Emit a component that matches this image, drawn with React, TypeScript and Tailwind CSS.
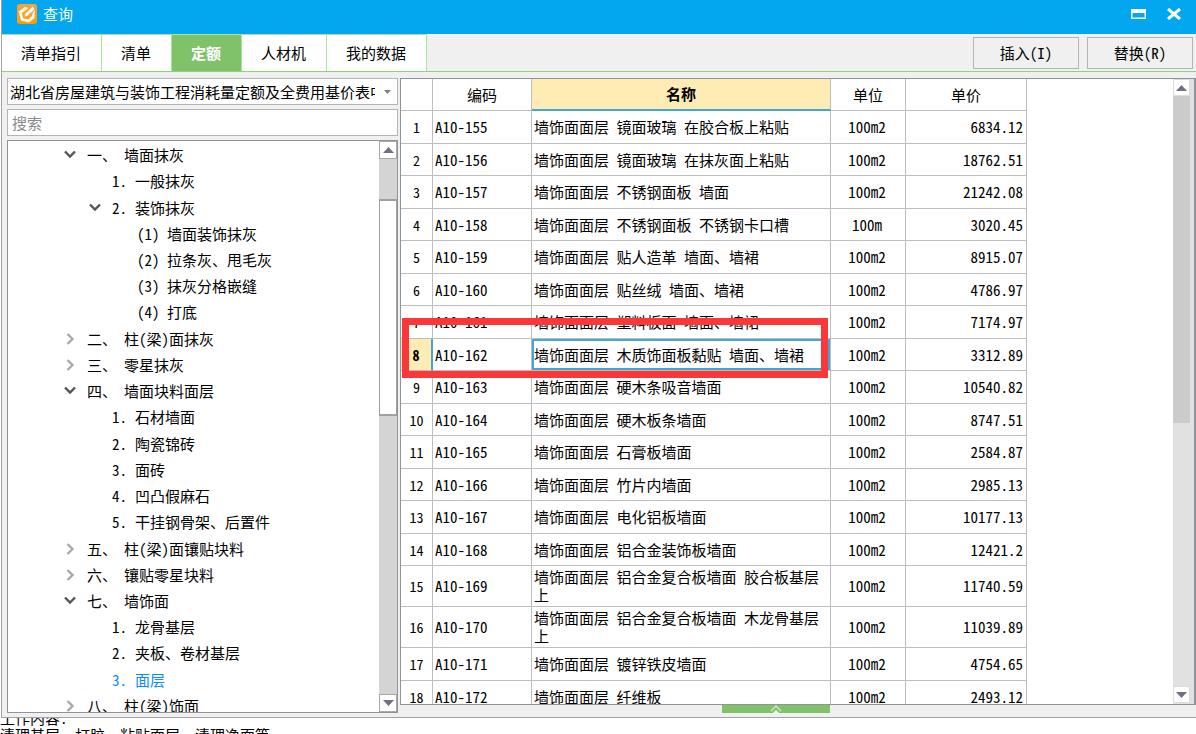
import { useState } from "react";

type TreeItem = {
  id: string;
  label: string;
  title: string;
  level: 1 | 2 | 3;
  open?: boolean;
};

type PriceRow = {
  code: string;
  name: string;
  unit: string;
  price: string;
};

const tabs = ["清单指引", "清单", "定额", "人材机", "我的数据"];

const tree: TreeItem[] = [
  { id: "1", label: "一、", title: "墙面抹灰", level: 1, open: true },
  { id: "1-1", label: "1.", title: "一般抹灰", level: 2 },
  { id: "1-2", label: "2.", title: "装饰抹灰", level: 2, open: true },
  { id: "1-2-1", label: "(1)", title: "墙面装饰抹灰", level: 3 },
  { id: "1-2-2", label: "(2)", title: "拉条灰、甩毛灰", level: 3 },
  { id: "1-2-3", label: "(3)", title: "抹灰分格嵌缝", level: 3 },
  { id: "1-2-4", label: "(4)", title: "打底", level: 3 },
  { id: "2", label: "二、", title: "柱(梁)面抹灰", level: 1, open: false },
  { id: "3", label: "三、", title: "零星抹灰", level: 1, open: false },
  { id: "4", label: "四、", title: "墙面块料面层", level: 1, open: true },
  { id: "4-1", label: "1.", title: "石材墙面", level: 2 },
  { id: "4-2", label: "2.", title: "陶瓷锦砖", level: 2 },
  { id: "4-3", label: "3.", title: "面砖", level: 2 },
  { id: "4-4", label: "4.", title: "凹凸假麻石", level: 2 },
  { id: "4-5", label: "5.", title: "干挂钢骨架、后置件", level: 2 },
  { id: "5", label: "五、", title: "柱(梁)面镶贴块料", level: 1, open: false },
  { id: "6", label: "六、", title: "镶贴零星块料", level: 1, open: false },
  { id: "7", label: "七、", title: "墙饰面", level: 1, open: true },
  { id: "7-1", label: "1.", title: "龙骨基层", level: 2 },
  { id: "7-2", label: "2.", title: "夹板、卷材基层", level: 2 },
  { id: "7-3", label: "3.", title: "面层", level: 2 },
  { id: "8", label: "八、", title: "柱(梁)饰面", level: 1, open: false }
];

const rows: PriceRow[] = [
  { code: "A10-155", name: "墙饰面面层 镜面玻璃 在胶合板上粘贴", unit: "100m2", price: "6834.12" },
  { code: "A10-156", name: "墙饰面面层 镜面玻璃 在抹灰面上粘贴", unit: "100m2", price: "18762.51" },
  { code: "A10-157", name: "墙饰面面层 不锈钢面板 墙面", unit: "100m2", price: "21242.08" },
  { code: "A10-158", name: "墙饰面面层 不锈钢面板 不锈钢卡口槽", unit: "100m", price: "3020.45" },
  { code: "A10-159", name: "墙饰面面层 贴人造革 墙面、墙裙", unit: "100m2", price: "8915.07" },
  { code: "A10-160", name: "墙饰面面层 贴丝绒 墙面、墙裙", unit: "100m2", price: "4786.97" },
  { code: "A10-161", name: "墙饰面面层 塑料板面 墙面、墙裙", unit: "100m2", price: "7174.97" },
  { code: "A10-162", name: "墙饰面面层 木质饰面板黏贴 墙面、墙裙", unit: "100m2", price: "3312.89" },
  { code: "A10-163", name: "墙饰面面层 硬木条吸音墙面", unit: "100m2", price: "10540.82" },
  { code: "A10-164", name: "墙饰面面层 硬木板条墙面", unit: "100m2", price: "8747.51" },
  { code: "A10-165", name: "墙饰面面层 石膏板墙面", unit: "100m2", price: "2584.87" },
  { code: "A10-166", name: "墙饰面面层 竹片内墙面", unit: "100m2", price: "2985.13" },
  { code: "A10-167", name: "墙饰面面层 电化铝板墙面", unit: "100m2", price: "10177.13" },
  { code: "A10-168", name: "墙饰面面层 铝合金装饰板墙面", unit: "100m2", price: "12421.2" },
  { code: "A10-169", name: "墙饰面面层 铝合金复合板墙面 胶合板基层上", unit: "100m2", price: "11740.59" },
  { code: "A10-170", name: "墙饰面面层 铝合金复合板墙面 木龙骨基层上", unit: "100m2", price: "11039.89" },
  { code: "A10-171", name: "墙饰面面层 镀锌铁皮墙面", unit: "100m2", price: "4754.65" },
  { code: "A10-172", name: "墙饰面面层 纤维板", unit: "100m2", price: "2493.12" }
];

const indent = {
  1: "pl-14",
  2: "pl-[81px]",
  3: "pl-[106px]"
};

const labelWidth = {
  1: "w-[37px]",
  2: "w-[23px]",
  3: "w-[30px]"
};

function Logo() {
  return (
    <svg className="h-5 w-5" viewBox="0 0 20 20" aria-hidden="true">
      <defs>
        <linearGradient id="logo" x1="0" y1="0" x2="0" y2="1">
          <stop offset="0" stopColor="#f0a640" />
          <stop offset="1" stopColor="#fd9c06" />
        </linearGradient>
      </defs>
      <rect width="20" height="20" rx="3" fill="url(#logo)" />
      <path d="M1.500 7.500 8 3l3.500 1-5 4-1.500 1 1 5 5 1.500 4-3.500 1-4 2-2-.5 8L12 18.500l-8-2z" fill="#fff6e6" />
      <path d="M15.500 2.500 18 5 10.500 12 7 13l1.200-3.500z" fill="#fff" stroke="#f3a83c" strokeWidth=".7" />
    </svg>
  );
}

function Triangle({ down = false }: { down?: boolean }) {
  return (
    <svg className="h-[6px] w-[11px]" viewBox="0 0 11 6" aria-hidden="true">
      <path d={down ? "M0 0h11L5.500 6z" : "M0 6h11L5.500 0z"} fill="#6f7180" />
    </svg>
  );
}

function Arrow({ open }: { open: boolean }) {
  return (
    <svg className="h-3 w-3" viewBox="0 0 12 12" fill="none" strokeWidth="2.400" aria-hidden="true">
      {open ? (
        <path d="M1 2.500 6 7.500 11 2.500" stroke="#555" />
      ) : (
        <path d="M3.500 1 8.500 6 3.500 11" stroke="#a8a8a8" />
      )}
    </svg>
  );
}

function TreeScrollbar() {
  return (
    <div className="flex w-[18px] shrink-0 flex-col bg-[#d4d4d4]">
      <button
        type="button"
        aria-label="向上滚动"
        className="flex h-[18px] items-center justify-center border border-[#a9a9a9] bg-white"
      >
        <Triangle />
      </button>
      <div className="mt-10 h-[217px] border border-y-2 border-[#a0a0a0] bg-white" />
      <button
        type="button"
        aria-label="向下滚动"
        className="mt-auto flex h-[18px] items-center justify-center border border-[#a9a9a9] bg-white"
      >
        <Triangle down />
      </button>
    </div>
  );
}

function TableScrollbar() {
  return (
    <div className="flex w-[21px] shrink-0 flex-col bg-[#e1e1e1] pr-1">
      <button
        type="button"
        aria-label="向上滚动"
        className="flex h-[17px] items-center justify-center rounded-xs border border-[#dcdcdc] bg-white"
      >
        <Triangle />
      </button>
      <div className="h-[327px] bg-[#cbcbcb]" />
      <button
        type="button"
        aria-label="向下滚动"
        className="mt-auto mb-px flex h-[17px] items-center justify-center rounded-xs border border-[#dcdcdc] bg-white"
      >
        <Triangle down />
      </button>
    </div>
  );
}

function Sidebar() {
  const [activeNode, setActiveNode] = useState("7-3");

  return (
    <aside className="flex w-[391px] shrink-0 flex-col gap-1">
      <div className="relative h-[27px] shrink-0">
        <select
          aria-label="定额库"
          className="h-full w-full appearance-none overflow-hidden border border-[#b4b4b4] bg-white pr-[22px] pl-[2px]"
        >
          <option>湖北省房屋建筑与装饰工程消耗量定额及全费用基价表中</option>
        </select>
        <svg className="pointer-events-none absolute top-3 right-[7px] h-1 w-[7px]" viewBox="0 0 7 4">
          <path d="M0 0h7L3.500 4z" fill="#7c7f90" />
        </svg>
      </div>
      <input
        aria-label="搜索"
        placeholder="搜索"
        className="h-[27px] shrink-0 border border-[#b4b4b4] bg-white px-1 placeholder:text-[#8a8a8a]"
      />
      <div className="flex min-h-0 flex-1 border border-[#8f939c] bg-white">
        <div className="min-w-0 flex-1 overflow-hidden">
          <ul className="grid h-[578px] auto-rows-fr pt-px">
            {tree.map((item) => (
              <li key={item.id} className={`flex items-center ${indent[item.level]}`}>
                <span className="w-[23px] shrink-0">
                  {item.open !== undefined && <Arrow open={item.open} />}
                </span>
                <button
                  type="button"
                  onClick={() => setActiveNode(item.id)}
                  className={`flex whitespace-nowrap ${activeNode === item.id ? "text-[#0a8cff]" : ""}`}
                >
                  <span className={`shrink-0 text-left ${labelWidth[item.level]}`}>{item.label}</span>
                  <span>{item.title}</span>
                </button>
              </li>
            ))}
          </ul>
        </div>
        <TreeScrollbar />
      </div>
    </aside>
  );
}

function PriceTable() {
  const [activeRow, setActiveRow] = useState(7);

  return (
    <section className="relative flex min-w-0 flex-1 overflow-hidden border border-r-2 border-[#8f939c] bg-white">
      <div className="min-w-0 flex-1 overflow-hidden">
        <table className="w-[626px] table-fixed border-separate border-spacing-0 [&_td]:border-r [&_td]:border-b [&_td]:border-[#bdbdbd] [&_th]:border-r [&_th]:border-b [&_th]:border-[#bdbdbd]">
          <colgroup>
            <col className="w-8" />
            <col className="w-[99px]" />
            <col className="w-[299px]" />
            <col className="w-[75px]" />
            <col className="w-[121px]" />
          </colgroup>
          <thead>
            <tr className="h-8">
              <th aria-label="序号" />
              <th className="font-normal">编码</th>
              <th className="border-b-2! border-b-[#3fa9d6]! bg-[#ffecb4] font-bold">名称</th>
              <th className="font-normal">单位</th>
              <th className="font-normal">单价</th>
            </tr>
          </thead>
          <tbody>
            {rows.map((row, index) => {
              const isActive = index === activeRow;

              return (
                <tr
                  key={row.code}
                  onClick={() => setActiveRow(index)}
                  className={row.name.length > 20 ? "h-[41px]" : "h-8 odd:h-[33px]"}
                >
                  <td
                    className={`text-center text-sm ${
                      isActive ? "border-r-2! border-r-[#3fa9d6]! bg-[#ffecb4] font-bold" : ""
                    }`}
                  >
                    {index + 1}
                  </td>
                  <td className="pl-[2px]">{row.code}</td>
                  <td
                    className={`pl-[2px] leading-[18px] ${
                      isActive ? "shadow-[inset_0_0_0_2px_#3fa9d6]" : ""
                    }`}
                  >
                    {row.name}
                  </td>
                  <td className="pr-[2px] text-center">{row.unit}</td>
                  <td className="pr-[3px] text-right">{row.price}</td>
                </tr>
              );
            })}
          </tbody>
        </table>
      </div>
      <TableScrollbar />
      <div className="pointer-events-none absolute top-[239px] left-px h-[60px] w-[426px] border-[7px] border-[#fb3839]" />
    </section>
  );
}

export default function App() {
  const [activeTab, setActiveTab] = useState("定额");

  return (
    <div className="flex h-screen flex-col overflow-hidden bg-white font-['Noto_Sans_CJK_SC',sans-serif] text-[15px] leading-5 text-black [font-feature-settings:'hwid']">
      <div className="ml-px flex min-h-0 flex-1 flex-col border-b border-l border-[#a3a3a3] bg-[#f0f0f0]">
        <header className="flex h-[34px] shrink-0 items-center bg-[#02a7f0] pr-3.5 pb-1.5 pl-[15px] text-white">
          <Logo />
          <h1 className="ml-1.5">查询</h1>
          <button type="button" aria-label="最大化" className="ml-auto">
            <svg className="h-3 w-[15px]" viewBox="0 0 15 12">
              <path d="M0 1h15v10H0zM1.500 5v4.500h12V5z" fill="#fff" fillRule="evenodd" />
            </svg>
          </button>
          <button type="button" aria-label="关闭" className="ml-5">
            <svg className="h-3 w-4" viewBox="0 0 16 12">
              <path d="M2 1 14 11M14 1 2 11" stroke="#fff" strokeWidth="3" />
            </svg>
          </button>
        </header>

        <div className="flex h-[38px] shrink-0 items-center border-b border-[#8ed27c]">
          <nav className="flex h-full border-t border-[#a9e59b]">
            {tabs.map((tab) => (
              <button
                key={tab}
                type="button"
                onClick={() => setActiveTab(tab)}
                className={`border-r border-[#a9e59b] pr-5 pl-[19px] ${
                  tab === activeTab ? "bg-[#80c269] font-bold text-white" : "bg-white"
                }`}
              >
                {tab}
              </button>
            ))}
          </nav>
          <div className="ml-auto flex gap-2 pr-[3px]">
            <button type="button" className="h-8 w-[106px] border border-[#b4b4b4]">
              插入(I)
            </button>
            <button type="button" className="h-8 w-[106px] border border-[#b4b4b4]">
              替换(R)
            </button>
          </div>
        </div>

        <main className="flex min-h-0 flex-1 gap-0.5 pt-1.5 pb-1 pl-[5px]">
          <Sidebar />
          <div className="flex min-w-0 flex-1 flex-col">
            <PriceTable />
            <button
              type="button"
              aria-label="展开"
              className="ml-[322px] flex h-2 w-[108px] shrink-0 justify-center bg-[#80c269]"
            >
              <svg className="h-2 w-3" viewBox="0 0 12 8" fill="none">
                <path d="M1 6 6 1l5 5" stroke="#cbe8c0" strokeWidth="1.500" />
                <path d="M3 8 6 5l3 3z" fill="#fff" />
              </svg>
            </button>
          </div>
        </main>
      </div>

      <footer className="h-4 shrink-0 overflow-hidden">
        <div className="-mt-[9px] leading-[17px]">
          <p>工作内容:</p>
          <p>清理基层、打胶、粘贴面层、清理净面等。</p>
        </div>
      </footer>
    </div>
  );
}
